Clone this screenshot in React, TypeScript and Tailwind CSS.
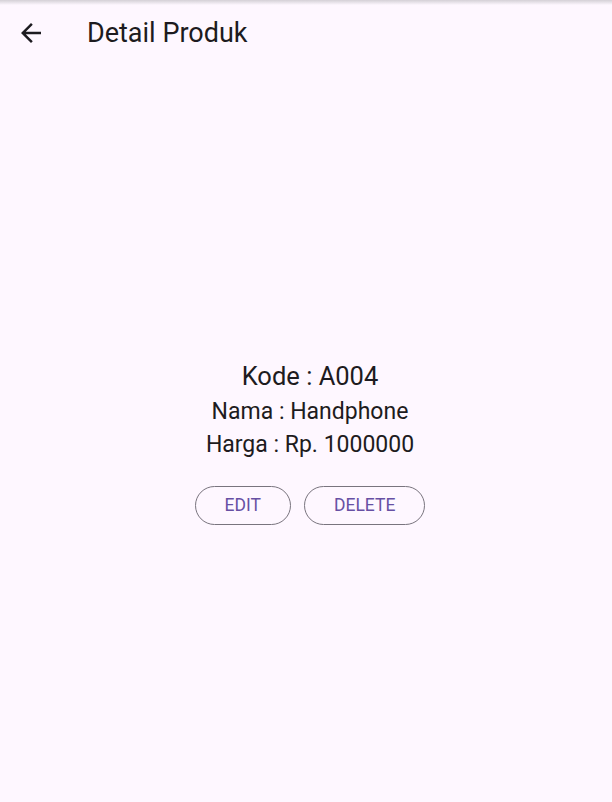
import React from "react";

const App = () => {
  return (
    <div
      className="min-h-[802px] w-full bg-[#fef7ff] text-[#1d1b20] relative"
      style={{ fontFamily: "Roboto, 'Noto Sans', sans-serif" }}
    >
      {/* top edge shadow */}
      <div className="absolute top-0 left-0 right-0 h-[5px] bg-gradient-to-b from-[#d4d0d6] to-[#fef7ff]"></div>

      {/* App bar */}
      <div className="h-[66px] flex items-center pl-[16px]">
        <svg width="30" height="30" viewBox="0 0 24 24" className="fill-[#1d1b20]">
          <path d="M20 11H7.83l5.59-5.59L12 4l-8 8 8 8 1.41-1.41L7.83 13H20v-2z" />
        </svg>
        <h1 className="ml-[41px] text-[27px] leading-[32px] font-normal">Detail Produk</h1>
      </div>

      {/* Body */}
      <div className="flex flex-col items-center pt-[296px] pl-[8px]">
        <p className="text-[25.5px] leading-[28px]">Kode : A004</p>
        <p className="text-[23px] leading-[32px] mt-[6px]">Nama : Handphone</p>
        <p className="text-[23px] leading-[32px] mt-[1px]">Harga : Rp. 1000000</p>
        <div className="flex gap-[13px] mt-[25px]">
          <button className="h-[39px] px-[29px] rounded-full border border-[#79747e] text-[#6750a4] text-[17.5px]">
            EDIT
          </button>
          <button className="h-[39px] px-[29px] rounded-full border border-[#79747e] text-[#6750a4] text-[17.5px]">
            DELETE
          </button>
        </div>
      </div>
    </div>
  );
};

export default App;
